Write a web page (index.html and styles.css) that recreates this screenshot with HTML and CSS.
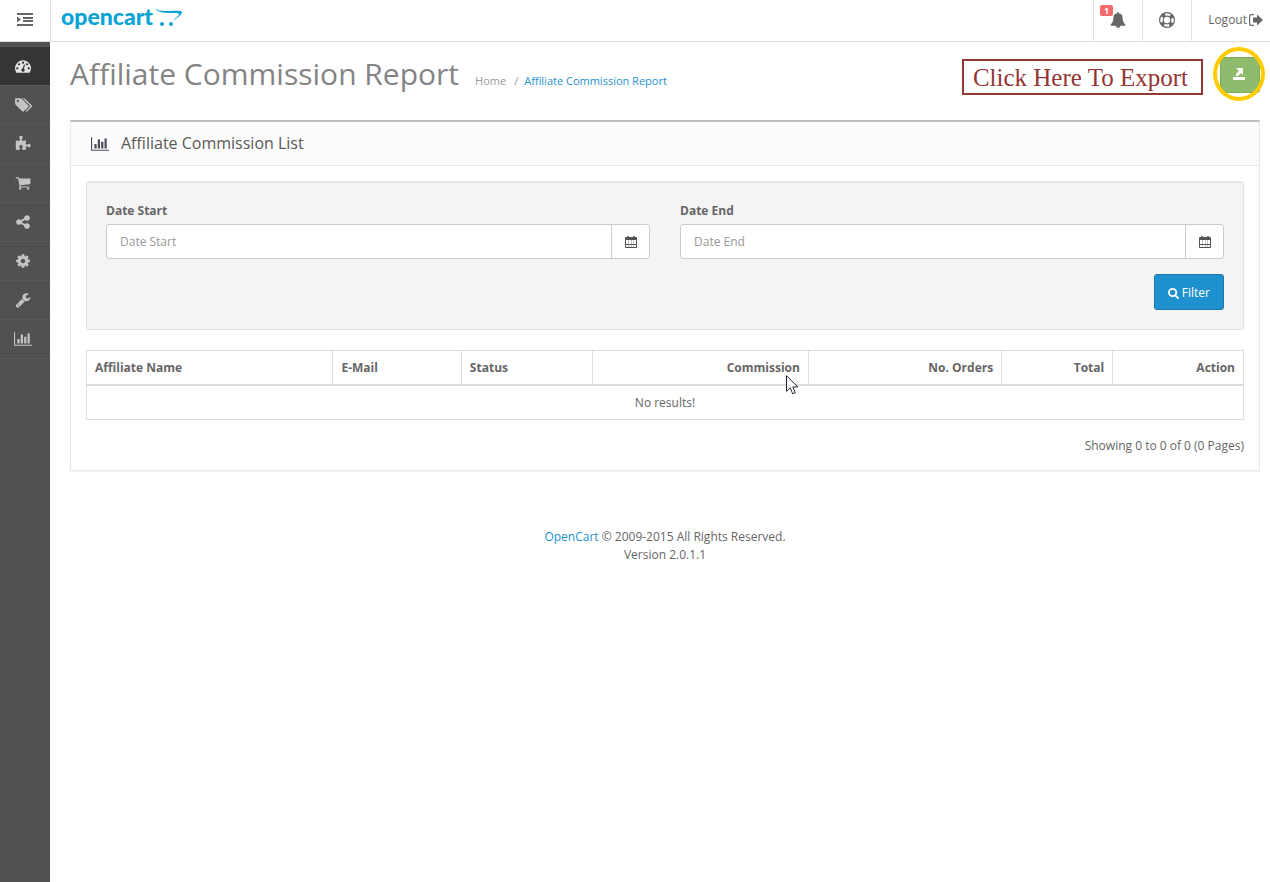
FILE: index.html
```html
<!DOCTYPE html>
<html lang="en">
<head>
<meta charset="utf-8">
<title>Affiliate Commission Report</title>
<link rel="stylesheet" href="styles.css">
</head>
<body>
<svg class="sprite" aria-hidden="true">
  <symbol id="bars" viewBox="0 0 2048 1792"><path d="M640 896v512h-256v-512h256zm384-512v1024h-256v-1024h256zm1024 1152v128h-2048v-1536h128v1408h1920zm-640-896v768h-256v-768h256zm384-384v1152h-256v-1152h256z"/></symbol>
  <symbol id="calendar" viewBox="0 0 12 12"><path d="M0 2q0-1 1-1h1q0-1 1-1t1 1h4q0-1 1-1t1 1h1q1 0 1 1v2H0z"/><path d="M0 3h1v8h10V3h1v8q0 1-1 1H1q-1 0-1-1z"/><path d="M1 8h10v1H1z"/><path d="M3 4h1v7H3zM6 4h1v7H6zM8 4h1v7H8z" opacity=".35"/></symbol>
</svg>

<header class="topbar">
  <button class="menu-toggle" type="button" aria-label="Toggle menu">
    <svg width="16" height="13" viewBox="0 0 16 13"><path d="M0 0h16v2H0zM6 4h10v2H6zM6 7h10v2H6zM0 11h16v2H0zM0 3.500l4 3-4 3z"/></svg>
  </button>
  <a class="logo" href="#" aria-label="opencart">
    <span class="logo-text">opencart</span>
    <svg class="logo-cart" width="28" height="20" viewBox="0 0 28 20"><path d="M0 0c3 3 8 3 14 3 7 0 14-1 13 2-1 2-5 5-9 8 2-3 6-5 6-7 0-1-4-1-9-1C8 5 2 4 0 0z"/><circle cx="7" cy="16" r="2"/><circle cx="16" cy="16" r="2"/></svg>
  </a>
  <nav class="topnav" aria-label="Account">
    <a class="topnav-item alerts" href="#" aria-label="Notifications">
      <svg width="16" height="16" viewBox="0 0 1792 1792"><path d="M912 1696q0-16-16-16-59 0-101.500-42.500t-42.500-101.500q0-16-16-16t-16 16q0 73 51.500 124.500t124.500 51.500q16 0 16-16zm816-288q0 52-38 90t-90 38h-448q0 106-75 181t-181 75-181-75-75-181h-448q-52 0-90-38t-38-90q50-42 91-88t85-119.500 74.500-158.500 50-206 19.500-260q0-152 117-282.500t307-158.500q-8-19-8-39 0-40 28-68t68-28 68 28 28 68q0 20-8 39 190 28 307 158.500t117 282.500q0 139 19.500 260t50 206 74.500 158.500 85 119.500 91 88z"/></svg>
      <span class="badge">1</span>
    </a>
    <a class="topnav-item" href="#" aria-label="Help">
      <svg width="16" height="16" viewBox="0 0 16 16" fill="none" stroke="currentColor"><circle cx="8" cy="8" r="7.400" stroke-width="1.200"/><circle cx="8" cy="8" r="3.800" stroke-width="1.200"/><circle cx="8" cy="8" r="5.600" stroke-width="3.400" stroke-dasharray="3.600 5.196" stroke-dashoffset="-2.600"/></svg>
    </a>
    <a class="topnav-item logout" href="#">Logout
      <svg width="14" height="12" viewBox="0 0 14 12"><path d="M5 0v1.200H2.500Q1.200 1.200 1.200 2.500v7q0 1.300 1.300 1.300H5V12H2.500Q0 12 0 9.500v-7Q0 0 2.500 0zM8 .5l6 5.500-6 5.500V8.500H4v-5h4z"/></svg>
    </a>
  </nav>
</header>

<div class="shell">
  <nav class="sidebar" aria-label="Main menu">
    <a class="side-item active" href="#" aria-label="Dashboard"><svg width="16" height="16" viewBox="0 0 1792 1792"><path d="M384 1152q0-53-37.500-90.500t-90.500-37.500-90.500 37.500-37.500 90.500 37.500 90.500 90.500 37.500 90.500-37.500 37.500-90.500zm192-448q0-53-37.500-90.500t-90.500-37.500-90.500 37.500-37.500 90.500 37.500 90.500 90.500 37.500 90.500-37.500 37.500-90.500zm428 481l101-382q6-26-7.500-48.500t-38.500-29.500-48 6.500-30 39.500l-101 382q-60 5-107 43.500t-63 98.500q-20 77 20 146t117 89 146-20 89-117q16-60-6-117t-72-91zm660-33q0-53-37.500-90.500t-90.500-37.500-90.500 37.500-37.500 90.500 37.500 90.500 90.500 37.500 90.500-37.500 37.500-90.500zm-640-640q0-53-37.500-90.500t-90.500-37.500-90.500 37.500-37.500 90.500 37.500 90.500 90.500 37.500 90.500-37.500 37.500-90.500zm448 192q0-53-37.500-90.500t-90.500-37.500-90.500 37.500-37.500 90.500 37.500 90.500 90.500 37.500 90.500-37.500 37.500-90.500zm320 448q0 261-141 483-19 29-54 29h-1402q-35 0-54-29-141-221-141-483 0-182 71-348t191-286 286-191 348-71 348 71 286 191 191 286 71 348z"/></svg></a>
    <a class="side-item" href="#" aria-label="Catalog"><svg width="17" height="16" viewBox="0 0 1899 1792"><path d="M448 448q0-53-37.500-90.500t-90.500-37.500-90.500 37.500-37.500 90.500 37.500 90.500 90.500 37.500 90.500-37.500 37.500-90.500zm1067 576q0 53-37 90l-491 492q-39 37-91 37-53 0-90-37l-715-716q-38-37-64.500-101t-26.500-117v-416q0-52 38-90t90-38h416q53 0 117 26.500t102 64.500l715 714q37 39 37 91zm384 0q0 53-37 90l-491 492q-39 37-91 37-36 0-59-14t-53-45l470-470q37-37 37-90 0-52-37-91l-715-714q-38-38-102-64.500t-117-26.500h224q53 0 117 26.500t102 64.500l715 714q37 39 37 91z"/></svg></a>
    <a class="side-item" href="#" aria-label="Extensions"><svg width="16" height="16" viewBox="0 0 1792 1792"><path d="M1755 1083q0 81-44.500 135t-123.500 54q-41 0-77.500-17.500t-59-38-56.500-38-71-17.500q-110 0-110 124 0 39 16 115t15 115v5q-22 0-33 1-34 3-97.500 11.500t-115.500 13.500-98 5q-61 0-103-26.500t-42-83.500q0-37 17.500-71t38-56.500 38-59 17.500-77.500q0-79-54-123.500t-135-44.500q-84 0-143 45.500t-59 127.500q0 43 15 83t33.500 64.500 33.500 53 15 50.500q0 45-46 89-37 35-117 35-95 0-245-24-9-2-27.500-4t-27.500-4l-13-2q-1 0-3-1-2 0-2-1v-1024q2 1 17.500 3.500t34 5 21.500 3.500q150 24 245 24 80 0 117-35 46-44 46-89 0-22-15-50.500t-33.500-53-33.500-64.500-15-83q0-82 59-127.500t144-45.500q80 0 134 44.500t54 123.500q0 41-17.500 77.500t-38 59-38 56.500-17.500 71q0 57 42 83.500t103 26.500q64 0 180-15t163-17v2q-1 2-3.500 17.500t-5 34-3.500 21.500q-24 150-24 245 0 80 35 117 44 46 89 46 22 0 50.500-15t53-33.500 64.500-33.500 83-15q82 0 127.500 59t45.500 143z"/></svg></a>
    <a class="side-item" href="#" aria-label="Sales"><svg width="16" height="16" viewBox="0 0 1792 1792"><path d="M704 1536q0 52-38 90t-90 38-90-38-38-90 38-90 90-38 90 38 38 90zm896 0q0 52-38 90t-90 38-90-38-38-90 38-90 90-38 90 38 38 90zm128-1088v512q0 24-16.500 42.500t-40.500 21.500l-1044 122q13 60 13 70 0 16-24 64h920q26 0 45 19t19 45-19 45-45 19h-1024q-26 0-45-19t-19-45q0-11 8-31.500t16-36 21.500-40 15.500-29.500l-177-823h-204q-26 0-45-19t-19-45 19-45 45-19h256q16 0 28.500 6.500t19.500 15.500 13 24.500 8 26 5.500 29.500 4.500 26h1201q26 0 45 19t19 45z"/></svg></a>
    <a class="side-item" href="#" aria-label="Marketing"><svg width="16" height="16" viewBox="0 0 1792 1792"><path d="M1344 1024q133 0 226.500 93.500t93.500 226.500-93.500 226.500-226.500 93.500-226.500-93.500-93.500-226.500q0-12 2-34l-360-180q-92 86-218 86-133 0-226.500-93.500t-93.500-226.500 93.500-226.500 226.500-93.500q126 0 218 86l360-180q-2-22-2-34 0-133 93.500-226.500t226.500-93.500 226.500 93.500 93.500 226.500-93.500 226.500-226.500 93.500q-126 0-218-86l-360 180q2 22 2 34t-2 34l360 180q92-86 218-86z"/></svg></a>
    <a class="side-item" href="#" aria-label="System"><svg width="16" height="16" viewBox="0 0 1792 1792"><path d="M1152 896q0-106-75-181t-181-75-181 75-75 181 75 181 181 75 181-75 75-181zm512-109v222q0 12-8 23t-20 13l-185 28q-19 54-39 91 35 50 107 138 10 12 10 25t-9 23q-27 37-99 108t-94 71q-12 0-26-9l-138-108q-44 23-91 38-16 136-29 186-7 28-36 28h-222q-14 0-24.500-8.500t-11.500-21.500l-28-184q-49-16-90-37l-141 107q-10 9-25 9-14 0-25-11-126-114-165-168-7-10-7-23 0-12 8-23 15-21 51-66.500t54-70.500q-27-50-41-99l-183-27q-13-2-21-12.500t-8-23.500v-222q0-12 8-23t19-13l186-28q14-46 39-92-40-57-107-138-10-12-10-24 0-10 9-23 26-36 98.500-107.500t94.500-71.500q13 0 26 10l138 107q44-23 91-38 16-136 29-186 7-28 36-28h222q14 0 24.500 8.500t11.500 21.500l28 184q49 16 90 37l142-107q9-9 24-9 13 0 25 10 129 119 165 170 7 8 7 22 0 12-8 23-15 21-51 66.500t-54 70.500q26 50 41 98l183 28q13 2 21 12.500t8 23.500z"/></svg></a>
    <a class="side-item" href="#" aria-label="Tools"><svg width="16" height="16" viewBox="0 0 1792 1792"><path d="M448 1472q0-26-19-45t-45-19-45 19-19 45 19 45 45 19 45-19 19-45zm644-420l-682 682q-37 37-90 37-52 0-91-37l-106-108q-38-36-38-90 0-53 38-91l681-681q39 98 114.500 173.500t173.500 114.500zm634-435q0 39-23 106-47 134-164.500 217.500t-258.500 83.500q-185 0-316.500-131.500t-131.500-316.500 131.500-316.500 316.500-131.500q58 0 121.500 16.500t107.500 46.500q16 11 16 28t-16 28l-293 169v224l193 107q5-3 79-48.500t135.500-81 70.500-35.500q15 0 23.500 10t8.500 25z"/></svg></a>
    <a class="side-item" href="#" aria-label="Reports"><svg width="18" height="16"><use href="#bars"/></svg></a>
  </nav>

  <div class="content">
    <div class="page-header">
      <h1>Affiliate Commission Report</h1>
      <ol class="breadcrumb">
        <li><a href="#">Home</a></li>
        <li><a class="current" href="#">Affiliate Commission Report</a></li>
      </ol>
      <div class="export">
        <div class="callout">Click Here To Export</div>
        <button class="btn-export" type="button" aria-label="Export">
          <svg width="12" height="12" viewBox="0 0 12 12"><path d="M0 9h12v3H0zM3 0h7v7L8 5 5 8H3V6l3-3z"/></svg>
        </button>
      </div>
    </div>

    <main class="panel">
      <div class="panel-heading">
        <svg width="18" height="16"><use href="#bars"/></svg>
        <h2>Affiliate Commission List</h2>
      </div>
      <div class="panel-body">
        <form class="well">
          <div class="filters">
            <div class="field">
              <label for="date-start">Date Start</label>
              <div class="input-group">
                <input id="date-start" type="text" placeholder="Date Start">
                <button type="button" aria-label="Pick start date"><svg width="12" height="12"><use href="#calendar"/></svg></button>
              </div>
            </div>
            <div class="field">
              <label for="date-end">Date End</label>
              <div class="input-group">
                <input id="date-end" type="text" placeholder="Date End">
                <button type="button" aria-label="Pick end date"><svg width="12" height="12"><use href="#calendar"/></svg></button>
              </div>
            </div>
          </div>
          <button class="btn-filter" type="button">
            <svg width="11" height="11" viewBox="0 0 12 12" fill="none" stroke="currentColor" stroke-width="2"><circle cx="5" cy="5" r="4"/><path d="M8 8l3 3" stroke-linecap="round"/></svg>
            Filter
          </button>
        </form>
        <table class="report">
          <colgroup><col class="c-name"><col class="c-mail"><col class="c-status"><col class="c-commission"><col class="c-orders"><col class="c-total"><col class="c-action"></colgroup>
          <thead>
            <tr><th>Affiliate Name</th><th>E-Mail</th><th>Status</th><th class="num">Commission</th><th class="num">No. Orders</th><th class="num">Total</th><th class="num">Action</th></tr>
          </thead>
          <tbody>
            <tr><td colspan="7">No results!</td></tr>
          </tbody>
        </table>
        <p class="showing">Showing 0 to 0 of 0 (0 Pages)</p>
      </div>
    </main>

    <footer class="footer"><a href="#">OpenCart</a> © 2009-2015 All Rights Reserved.<br>Version 2.0.1.1</footer>
  </div>
</div>
<svg class="cursor" width="12" height="20" viewBox="0 0 12 20" aria-hidden="true"><path d="M.5.700v15.600l3.700-3.500 2.500 6 2.600-1.100-2.500-5.800h5z" fill="#fff" stroke="#223"/></svg>
</body>
</html>
```
FILE: styles.css
```css
*, *::before, *::after { box-sizing: border-box; }

body {
  margin: 0;
  min-height: 100vh;
  display: flex;
  flex-direction: column;
  background: #fff;
  color: #666;
  font: 12px/18px "Open Sans", "Noto Sans", sans-serif;
}

a { color: #1e91cf; text-decoration: none; }
svg { display: block; fill: currentColor; flex: none; }
svg[fill="none"] { fill: none; }
button, input { font: inherit; }
.sprite { position: absolute; width: 0; height: 0; }

/* Top bar */
.topbar {
  display: flex;
  height: 42px;
  border-bottom: 1px solid #ddd;
}
.menu-toggle {
  width: 51px;
  padding: 0 0 2px 17px;
  border: 0;
  border-right: 1px solid #e1e1e1;
  background: none;
  color: #666;
}
.logo {
  display: flex;
  gap: 2px;
  padding: 0 10px;
  color: #0aa3d6;
}
.logo-text {
  font: 900 23px/33px Lato, "Open Sans", sans-serif;
}
.logo-cart { margin-top: 8px; }
.topnav { display: flex; margin-left: auto; }
.topnav-item {
  display: flex;
  align-items: center;
  justify-content: center;
  width: 49px;
  padding-bottom: 2px;
  border-left: 1px solid #e1e1e1;
  color: #666;
}
.alerts { position: relative; }
.badge {
  position: absolute;
  top: 5px;
  left: 6px;
  width: 13px;
  border-radius: 2px;
  background: #f56b6b;
  color: #fff;
  font-size: 9px;
  font-weight: 700;
  line-height: 11px;
  text-align: center;
}
.logout { width: auto; gap: 2px; padding: 0 7px 2px 16px; }

/* Sidebar */
.shell { display: flex; flex: 1; }
.sidebar {
  width: 50px;
  padding-top: 5px;
  background: #515151;
}
.side-item {
  display: flex;
  align-items: center;
  justify-content: center;
  height: 39px;
  padding-right: 4px;
  border-bottom: 1px solid #5a5a5a;
  color: #c4c4c4;
}
.side-item.active { background: #363636; color: #e4e4e4; }

/* Page header */
.content { flex: 1; min-width: 0; padding: 15px 10px 0 20px; }
.page-header {
  display: flex;
  height: 63px;
}
h1 {
  margin: 0;
  color: #848484;
  font-size: 30px;
  font-weight: 400;
  line-height: 34px;
}
.breadcrumb {
  display: flex;
  margin: 15px 0 0;
  padding: 0 0 0 16px;
  list-style: none;
  font-size: 11px;
}
.breadcrumb a { color: #999; }
.breadcrumb .current { color: #1e91cf; }
.breadcrumb li + li::before { content: "/"; padding: 0 6px 0 8px; color: #999; }
.export {
  position: relative;
  display: flex;
  gap: 17px;
  align-items: flex-start;
  margin-left: auto;
}
.callout {
  margin-top: 2px;
  padding: 1px 13px 0 9px;
  border: 2px solid #943634;
  color: #943634;
  font: 25px/31px "Liberation Serif", serif;
}
.btn-export {
  display: flex;
  align-items: center;
  justify-content: center;
  width: 40px;
  height: 36px;
  padding: 0 2px 2px 0;
  border: 1px solid #7aae50;
  border-radius: 3px;
  background: #8fbb6c;
  color: #fff;
}
.export::after {
  content: "";
  position: absolute;
  top: -10px;
  right: -5px;
  width: 52px;
  height: 54px;
  border: 4px solid #fc0;
  border-radius: 50%;
}

/* Panel */
.panel {
  border: 1px solid #e8e8e8;
  border-top: 2px solid #bfbfbf;
  box-shadow: 0 1px 1px rgba(0, 0, 0, .05);
}
.panel-heading {
  display: flex;
  align-items: center;
  gap: 12px;
  height: 44px;
  padding: 0 20px;
  border-bottom: 1px solid #e8e8e8;
  background: #fcfcfc;
  color: #4c4d5a;
}
h2 { margin: 0 0 2px; color: #595959; font-size: 16px; font-weight: 400; }
.panel-body { padding: 15px; }
.well {
  display: flex;
  flex-direction: column;
  align-items: flex-end;
  gap: 15px;
  margin-bottom: 20px;
  padding: 19px;
  border: 1px solid #e3e3e3;
  border-radius: 3px;
  background: #f4f4f4;
  box-shadow: inset 0 1px 1px rgba(0, 0, 0, .05);
}
.filters {
  display: grid;
  grid-template-columns: 1fr 1fr;
  gap: 30px;
  width: 100%;
}
.field { display: flex; flex-direction: column; gap: 4px; padding-top: 1px; }
.field label { font-weight: 700; }
.input-group {
  display: flex;
  height: 35px;
  border: 1px solid #ccc;
  border-radius: 3px;
  background: #fff;
}
.input-group input {
  flex: 1;
  min-width: 0;
  padding: 0 13px;
  border: 0;
  background: none;
  color: #555;
}
.input-group input::placeholder { color: #999; opacity: 1; }
.input-group button {
  display: flex;
  align-items: center;
  justify-content: center;
  width: 38px;
  padding: 0;
  border: 0;
  border-left: 1px solid #ccc;
  background: none;
  color: #555;
}
.btn-filter {
  display: flex;
  align-items: center;
  gap: 3px;
  height: 36px;
  padding: 2px 13px 0;
  border: 1px solid #1978ab;
  border-radius: 3px;
  background: #1e91cf;
  color: #fff;
}

/* Table */
.report {
  width: 100%;
  border-collapse: collapse;
  table-layout: fixed;
  line-height: 17px;
}
.report th, .report td {
  padding: 8px;
  border: 1px solid #ddd;
  text-align: left;
}
.report th { border-bottom-width: 2px; }
.report .num { text-align: right; }
.report td { text-align: center; }
.c-name { width: 21.300%; }
.c-mail { width: 11.100%; }
.c-status { width: 11.300%; }
.c-commission { width: 18.700%; }
.c-orders { width: 16.700%; }
.c-total { width: 9.600%; }
.c-action { width: 11.300%; }
.showing { margin: 17px 0 0; text-align: right; }

.footer { margin-top: 57px; text-align: center; }

.cursor { position: absolute; left: 786px; top: 375px; }
```
